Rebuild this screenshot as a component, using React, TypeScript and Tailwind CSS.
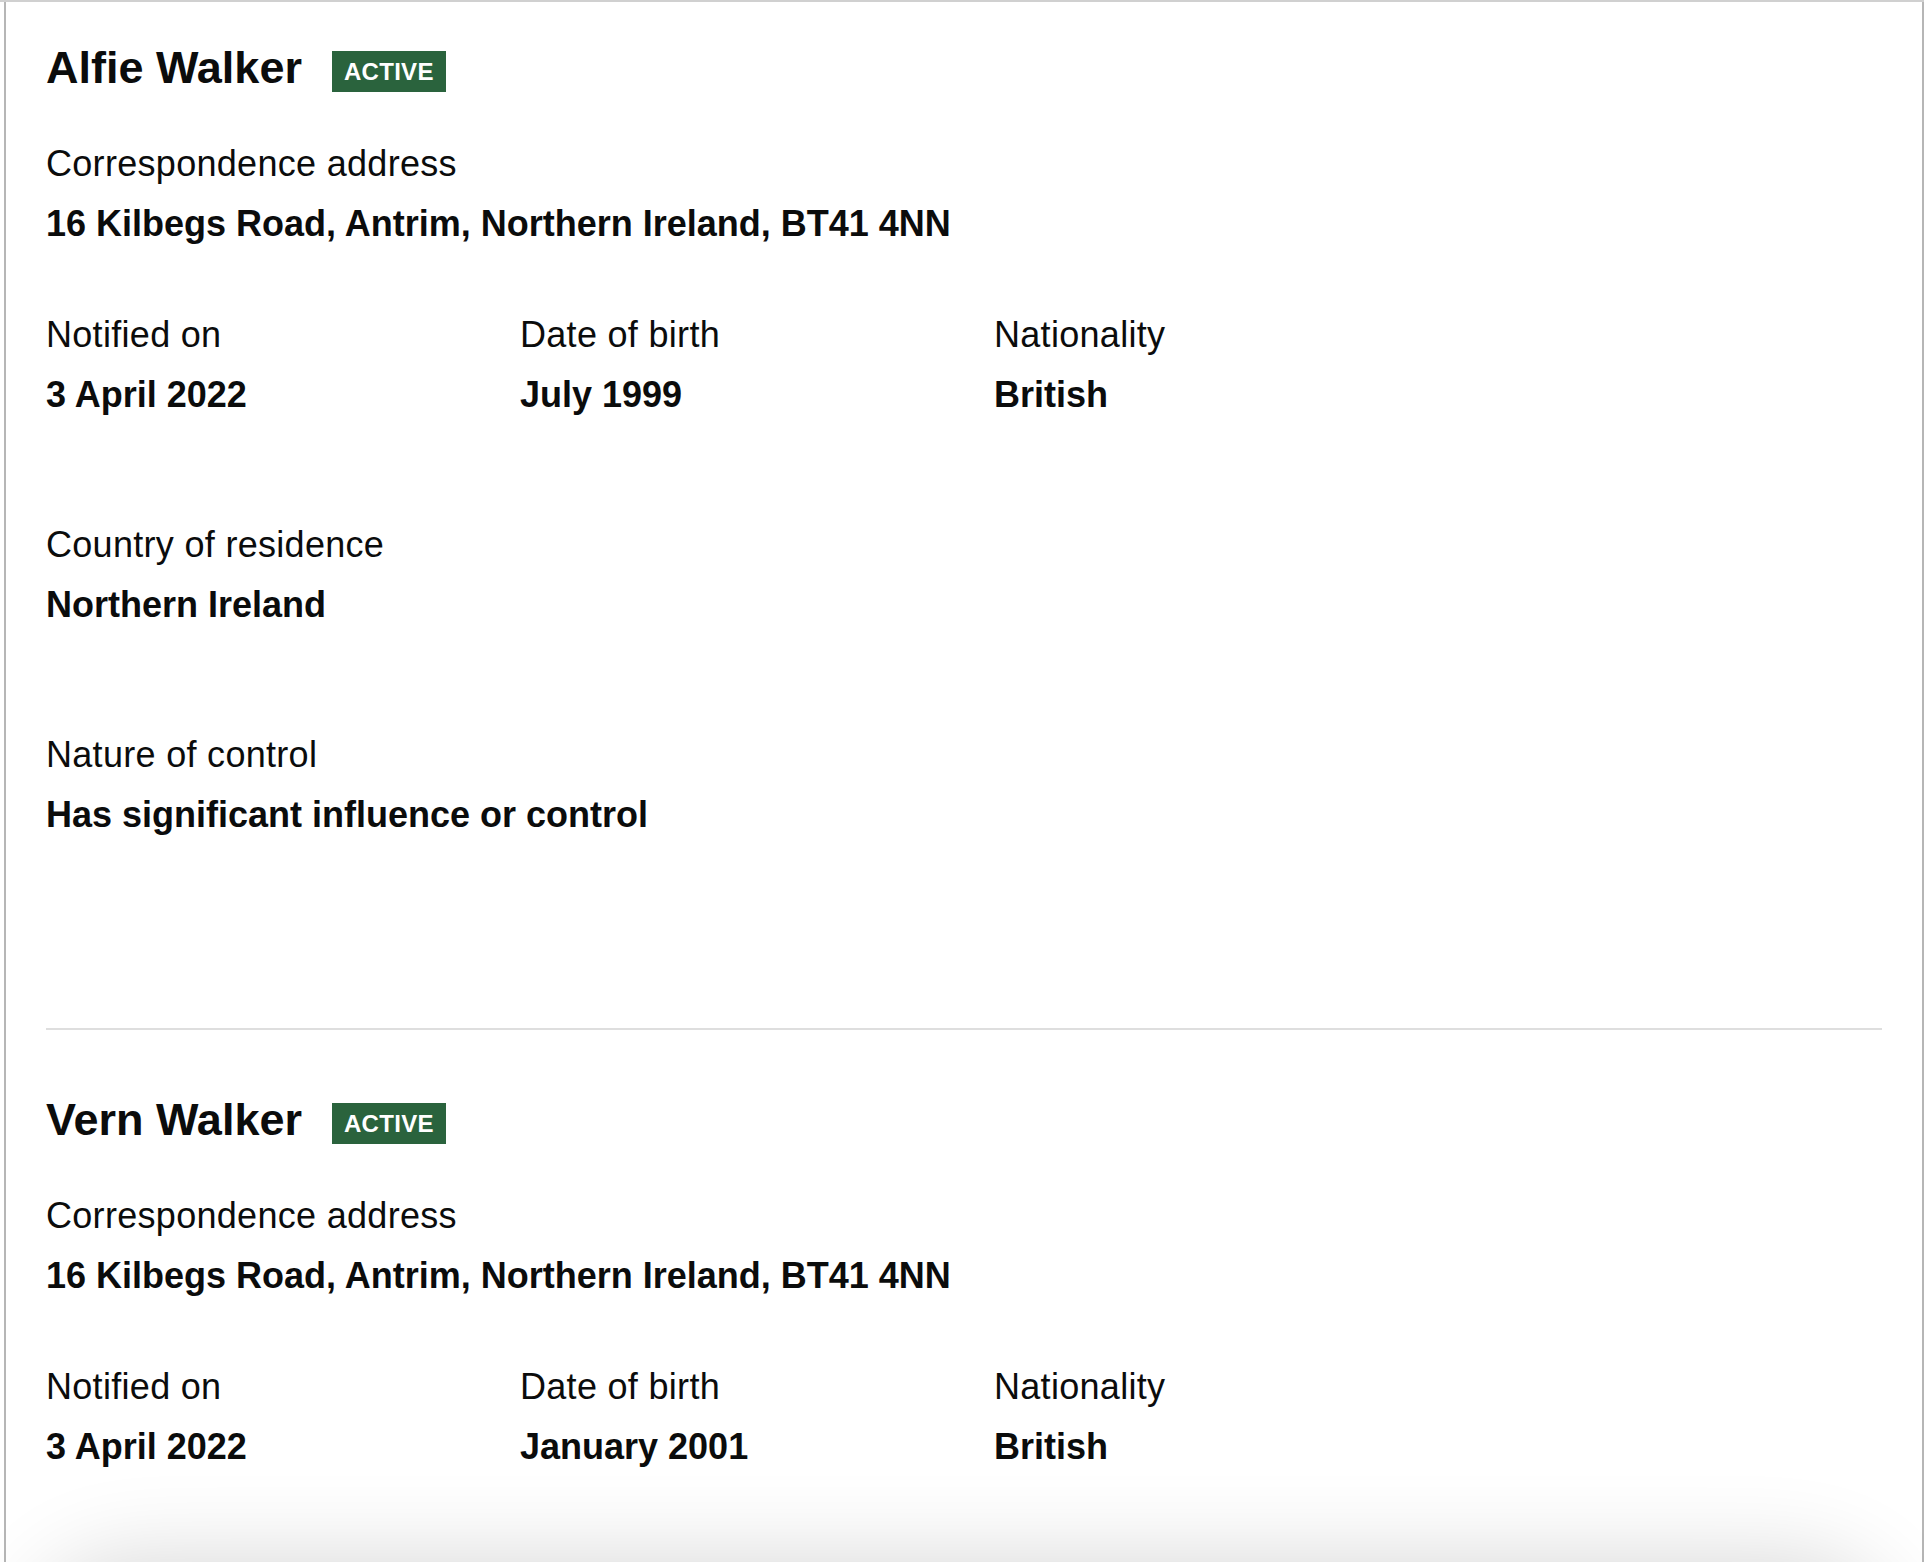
const font = { fontFamily: '"Liberation Sans", Arial, sans-serif' };

type Field = { label: string; value: string; wide?: boolean };

type Person = {
  name: string;
  address: string;
  fields: Field[];
};

const people: Person[] = [
  {
    name: 'Alfie Walker',
    address: '16 Kilbegs Road, Antrim, Northern Ireland, BT41 4NN',
    fields: [
      { label: 'Notified on', value: '3 April 2022' },
      { label: 'Date of birth', value: 'July 1999' },
      { label: 'Nationality', value: 'British' },
      { label: 'Country of residence', value: 'Northern Ireland', wide: true },
      { label: 'Nature of control', value: 'Has significant influence or control', wide: true },
    ],
  },
  {
    name: 'Vern Walker',
    address: '16 Kilbegs Road, Antrim, Northern Ireland, BT41 4NN',
    fields: [
      { label: 'Notified on', value: '3 April 2022' },
      { label: 'Date of birth', value: 'January 2001' },
      { label: 'Nationality', value: 'British' },
    ],
  },
];

function Item({ label, value }: { label: string; value: string }) {
  return (
    <div>
      <div className="text-[36px] leading-[45px] tracking-[0.3px] text-[#0b0c0c]">{label}</div>
      <div className="mt-[15px] text-[36px] leading-[45px] font-bold text-[#0b0c0c]">
        {value}
      </div>
    </div>
  );
}

function PersonBlock({ person }: { person: Person }) {
  return (
    <section>
      {/* Name + status */}
      <div className="flex items-start gap-[30px]">
        <h2 className="text-[45px] leading-[50px] font-bold text-[#0b0c0c]">
          {person.name}
        </h2>
        <span className="mt-[8px] h-[41px] px-[12px] flex items-center bg-[#2a633d] text-white text-[24px] font-bold tracking-[0.3px]">
          ACTIVE
        </span>
      </div>

      <div className="mt-[48px]">
        <Item label="Correspondence address" value={person.address} />
      </div>

      <div className="mt-[66px] grid grid-cols-4 gap-x-[60px] gap-y-[105px]">
        {person.fields.map((f) => (
          <div key={f.label} className={f.wide ? 'col-span-4' : ''}>
            <Item label={f.label} value={f.value} />
          </div>
        ))}
      </div>
    </section>
  );
}

export default function App() {
  return (
    <div className="relative h-screen overflow-hidden bg-white" style={font}>
      <div className="h-[2px] bg-[#d0d0d0]" />
      <div className="ml-[4px] h-full border-x-2 border-[#b6b6b6] pl-[40px] pr-[40px] pt-[41px]">
        <PersonBlock person={people[0]} />
        <div className="mt-[191px] mb-[65px] h-[2px] bg-[#dedede]" />
        <PersonBlock person={people[1]} />
      </div>

      {/* shadow of the sticky bar below the fold */}
      <div className="absolute left-[70px] right-[70px] top-[1600px] h-[120px] rounded-[60px] shadow-[0_0_90px_40px_rgba(0,0,0,0.16)]" />
    </div>
  );
}
